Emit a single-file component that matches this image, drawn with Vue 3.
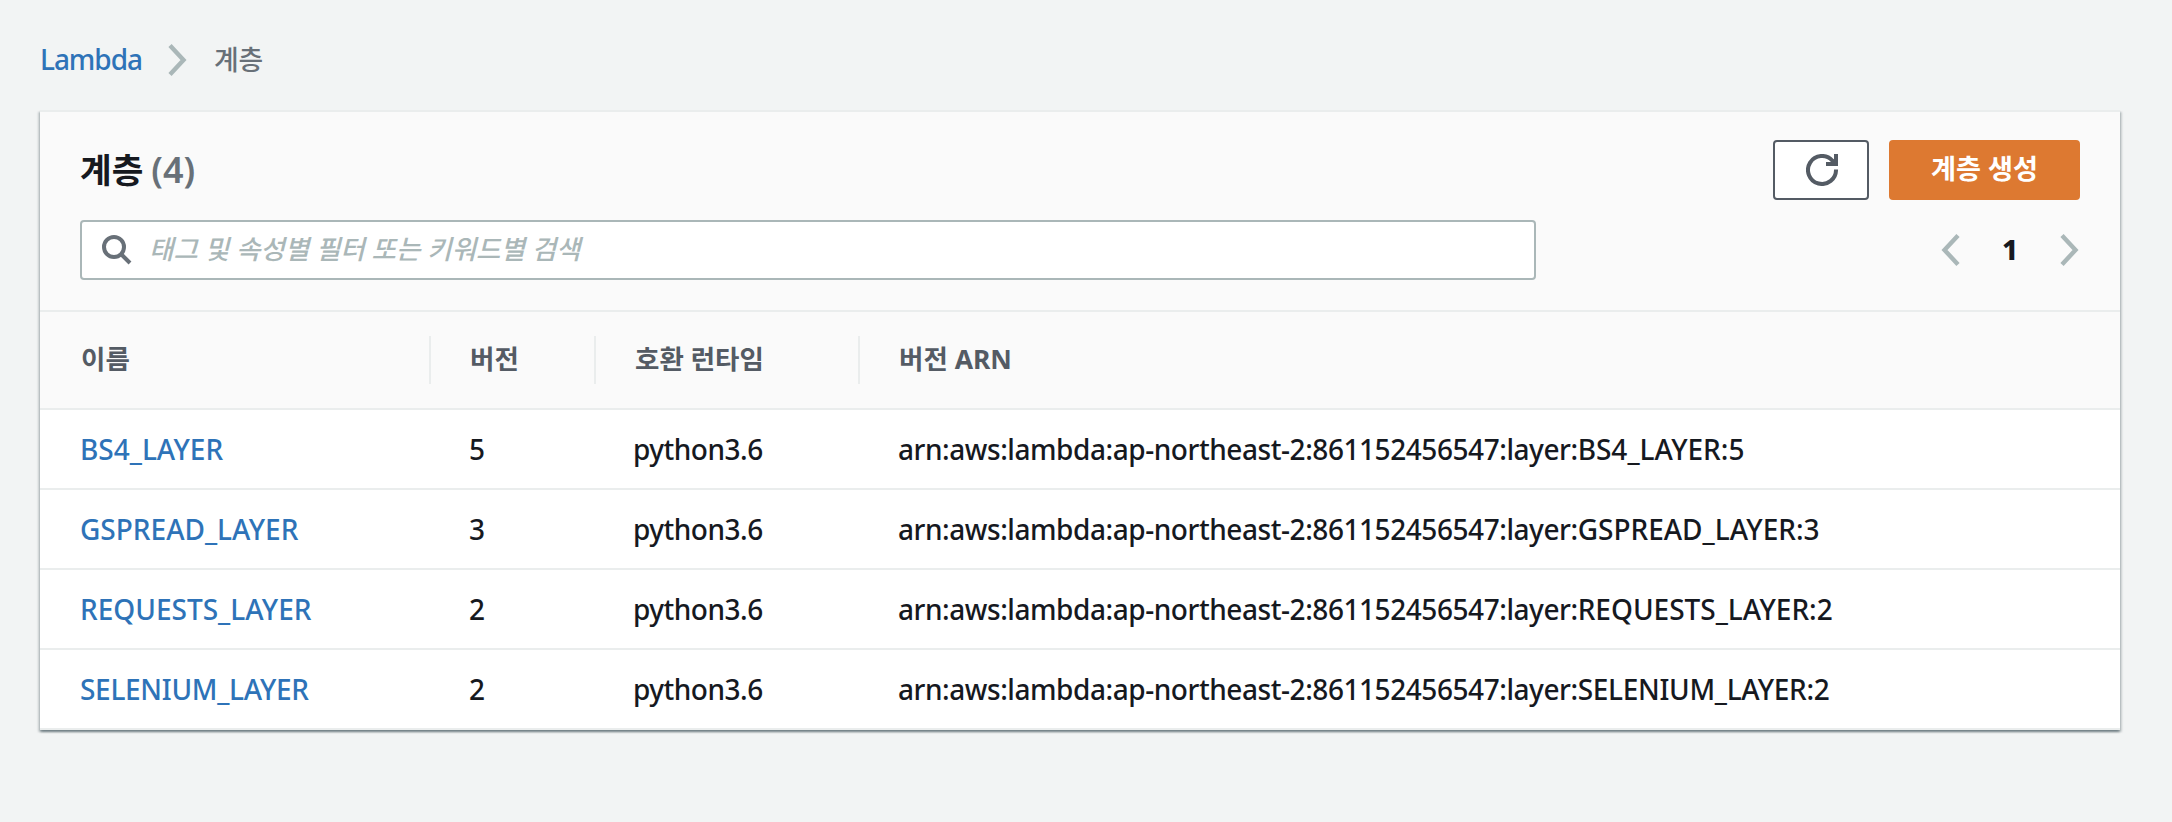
<script setup>
const layers = [
  { name: 'BS4_LAYER', version: 5 },
  { name: 'GSPREAD_LAYER', version: 3 },
  { name: 'REQUESTS_LAYER', version: 2 },
  { name: 'SELENIUM_LAYER', version: 2, tight: true },
]
const arnPrefix = 'arn:aws:lambda:ap-northeast-2:861152456547:layer:'
</script>

<template>
  <div class="page">
    <nav class="crumbs">
      <a class="link">Lambda</a>
      <svg class="chev" width="20" height="32" viewBox="0 0 20 32"><path d="M2 1.500 15.500 16 2 30.500" /></svg>
      <span class="here">계층</span>
    </nav>
    <section class="panel">
      <header class="head">
        <div class="row">
          <h1>계층<span>(4)</span></h1>
          <div class="actions">
            <button class="btn refresh">
              <svg width="32" height="32" viewBox="0 0 32 32"><path class="arc" d="M30 15.500A14 14 0 1 1 26.500 6.700L30 10" /><path class="tip" d="M28 0h4v12H20V8h8z" /></svg>
            </button>
            <button class="btn primary">계층 생성</button>
          </div>
        </div>
        <div class="row">
          <div class="search">
            <svg width="30" height="30" viewBox="0 0 30 30"><circle cx="12" cy="12" r="10" /><path d="M19 19l9 9" /></svg>
            <em>태그 및 속성별 필터 또는 키워드별 검색</em>
          </div>
          <div class="pager">
            <svg class="chev" width="20" height="32" viewBox="0 0 20 32"><path d="M18 1.500 4.500 16 18 30.500" /></svg>
            <b>1</b>
            <svg class="chev" width="20" height="32" viewBox="0 0 20 32"><path d="M2 1.500 15.500 16 2 30.500" /></svg>
          </div>
        </div>
      </header>
      <div class="grid thead">
        <div>이름</div><div>버전</div><div>호환 런타임</div><div>버전 ARN</div>
      </div>
      <div v-for="l in layers" :key="l.name" class="grid item">
        <div><a class="link" :class="{ tight: l.tight }">{{ l.name }}</a></div>
        <div>{{ l.version }}</div>
        <div class="runtime">python3.6</div>
        <div><span class="prefix">{{ arnPrefix }}</span><span :class="{ tight: l.tight }">{{ l.name }}:{{ l.version }}</span></div>
      </div>
    </section>
  </div>
</template>

<style>
body { margin: 0; background: #f2f4f4; }
</style>
<style scoped>
.page { box-sizing: border-box; height: 822px; overflow: hidden; padding: 0 52px 0 40px; font: 500 28px/40px "Noto Sans", "Noto Sans CJK KR", sans-serif; color: #16191f; }
.link { color: #2e73b8; }
.crumbs { display: flex; align-items: center; height: 110px; padding-top: 10px; box-sizing: border-box; color: #687078; }
.crumbs .link { letter-spacing: -1.05px; padding-bottom: 2px; }
.here { font-size: 26.8px; padding-bottom: 1px; }
.chev { display: block; fill: none; stroke: #aab7b8; stroke-width: 4.4; }
.crumbs .chev { margin: 0 26px; }
.panel { width: 2080px; border-top: 2px solid #eaeded; background: #fff; box-shadow: 0 2px 2px 0 rgba(0, 28, 36, .35), 2px 2px 2px 0 rgba(0, 28, 36, .15), -2px 2px 2px 0 rgba(0, 28, 36, .15); }
.head { height: 198px; box-sizing: border-box; padding: 28px 40px 0; background: #fafafa; display: flex; flex-direction: column; gap: 20px; }
.row { display: flex; justify-content: space-between; align-items: center; height: 60px; }
h1 { margin: 0; font-size: 34.4px; font-weight: 700; display: flex; align-items: baseline; gap: 8px; }
h1 span { color: #687078; font-size: 36px; font-weight: 600; }
.actions { display: flex; gap: 20px; }
.btn { box-sizing: border-box; height: 60px; border-radius: 4px; border: 2px solid #545b64; background: #fff; padding: 0; font: inherit; font-weight: 700; display: flex; align-items: center; justify-content: center; }
.refresh { width: 96px; padding-left: 2px; }
.arc { fill: none; stroke: #545b64; stroke-width: 4; }
.tip { fill: #545b64; }
.primary { width: 191px; background: #dd7931; border-color: #dd7931; color: #fff; font-size: 27.2px; padding-bottom: 2px; }
.search { box-sizing: border-box; width: 1456px; height: 60px; border: 2px solid #aab7b8; border-radius: 4px; background: #fff; display: flex; align-items: center; gap: 17px; padding-left: 20px; color: #aab7b8; }
.search svg { fill: none; stroke: #687078; stroke-width: 4; }
.search em { font-size: 26.5px; padding-bottom: 2px; }
.pager { display: flex; align-items: center; justify-content: space-between; width: 140px; }
.pager b { padding-bottom: 2px; font-weight: 800; }
.grid { display: grid; grid-template-columns: 389px 165px 264px 1fr; align-items: center; box-sizing: border-box; height: 80px; border-bottom: 2px solid #eaeded; }
.grid > div { padding-left: 40px; white-space: nowrap; }
.tight { letter-spacing: -.3px; }
.grid .runtime { letter-spacing: -.5px; padding-left: 39px; }
.prefix { letter-spacing: -.44px; }
.thead { height: 100px; background: #fafafa; border-top: 2px solid #eaeded; color: #545b64; font-weight: 700; font-size: 26.5px; }
.thead > div { height: 48px; line-height: 46px; }
.thead > div:first-child { padding-left: 41px; }
.thead > div + div { border-left: 2px solid #eaeded; padding-left: 39px; }
</style>
